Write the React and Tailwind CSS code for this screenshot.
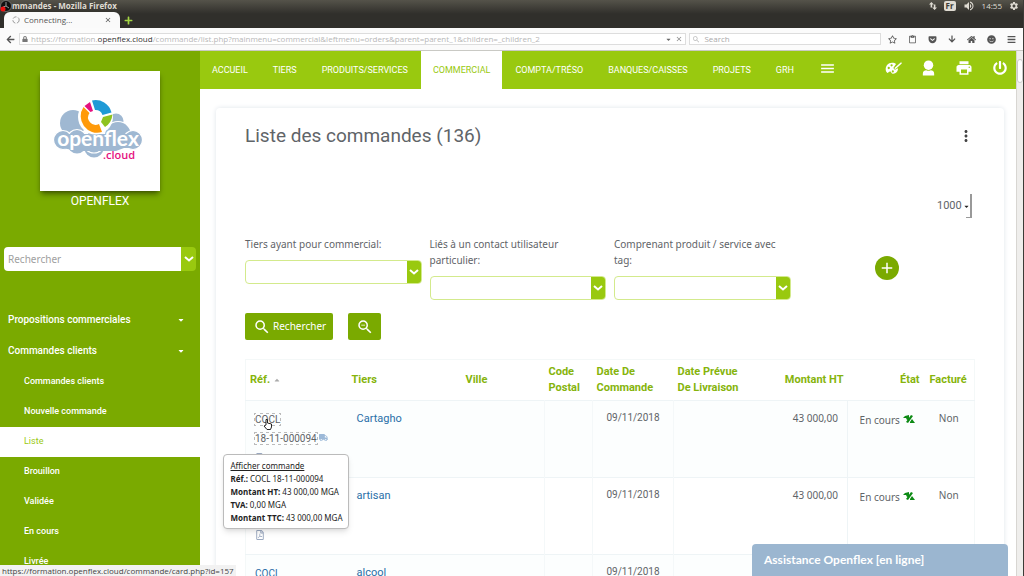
import { useState } from 'react';
import { FaArrowLeft, FaArrowDown, FaLock, FaPlus, FaRegStar, FaHome, FaCaretDown, FaCaretUp, FaTruck, FaRegFilePdf, FaGetPocket, FaSmile, FaPowerOff, FaBars } from 'react-icons/fa';
import { MdMenu, MdSearch, MdZoomOut, MdPrint, MdMoreVert, MdAdd, MdClose, MdVolumeUp, MdContentPaste, MdSettings } from 'react-icons/md';

const menus = ['ACCUEIL', 'TIERS', 'PRODUITS/SERVICES', 'COMMERCIAL', 'COMPTA/TRÉSO', 'BANQUES/CAISSES', 'PROJETS', 'GRH'];

const subMenus = ['Commandes clients', 'Nouvelle commande', 'Liste', 'Brouillon', 'Validée', 'En cours', 'Livrée'];

const filters = [
  { id: 'commercial', label: 'Tiers ayant pour commercial:' },
  { id: 'contact', label: 'Liés à un contact utilisateur particulier:' },
  { id: 'tag', label: 'Comprenant produit / service avec tag:' },
];

const orders = [
  { id: 1, number: '18-11-000094', tiers: 'Cartagho', date: '09/11/2018', amount: '43 000,00', hovered: true },
  { id: 2, number: '18-11-000093', tiers: 'artisan', date: '09/11/2018', amount: '43 000,00' },
  { id: 3, number: '18-11-000092', tiers: 'alcool', date: '09/11/2018', amount: '43 000,00' },
];

const Chevron = () => (
  <svg viewBox="0 0 10 8" className="w-[10px] h-2" fill="none" stroke="white" strokeWidth="2">
    <path d="M1 2 L5 5.5 L9 2" />
  </svg>
);

const Logo = () => (
  <svg viewBox="0 0 120 120" className="w-full h-full">
    <g fill="#9fb8d2">
      <circle cx="33" cy="52" r="13" />
      <circle cx="76" cy="50" r="7.500" />
      <circle cx="54" cy="77" r="9.500" />
      <circle cx="37" cy="73" r="9.500" />
    </g>
    <g fill="#9fb8d2" stroke="white" strokeWidth="1.200">
      <circle cx="78" cy="64" r="13.500" />
      <circle cx="23" cy="69" r="9.500" />
      <circle cx="37" cy="68" r="9.500" />
      <circle cx="54" cy="71" r="11" />
      <circle cx="93" cy="69" r="9.500" />
    </g>
    <path fill="#9fb8d2" d="M22 63h72v14H84l-8 3H38l-16-3z" />
    <circle cx="55.500" cy="46" r="17.500" fill="white" />
    <path fill="#ff9a0a" d="M43.500 36 A16.500 16.500 0 0 0 62 61 L59 53 A7.500 7.500 0 0 1 49.500 42 Z" />
    <path fill="#e5117f" d="M44.500 35 L50 31 L53 40 L50.500 41 Z" />
    <path fill="#1f9ad6" d="M52 29.500 A16.500 16.500 0 0 1 71.500 41.500 L62.500 44 A7.500 7.500 0 0 0 55 39 Z" />
    <path fill="#8fc31f" d="M72.500 43.500 A16.500 16.500 0 0 1 65 56 L61 51 L63 46 Z" />
    <text x="58" y="75" textAnchor="middle" fontFamily="Lato" fontWeight="bold" fontSize="21" fill="white">openflex</text>
    <text x="63" y="88" fontFamily="Open Sans" fontWeight="600" fontSize="11" fill="#e5117f">.cloud</text>
  </svg>
);

const PaletteIcon = () => (
  <svg viewBox="0 0 18 16" className="w-[17px] h-4" fill="white">
    <path fillRule="evenodd" d="M7.500 2.500c2 0 3.200.6 4.200 1.300L8.800 8l1.700 1.800 3.300-1.600c.2 3.600-2.600 6.300-5.800 5.800-1.600-.3-1.200-2-2.500-2.200C3.800 11.600 3.600 13.800 2.300 13 -1 10.500 1 2.500 7.500 2.500zM4 6.800a1.200 1.200 0 1 0 0 2.400 1.200 1.200 0 0 0 0-2.400zM7 4a1.200 1.200 0 1 0 0 2.400A1.200 1.200 0 0 0 7 4zM8.300 10.500a1.100 1.100 0 1 0 0 2.200 1.100 1.100 0 0 0 0-2.200z" />
    <path d="M9.800 8.200 17.500 1.500l-.3 1.300.8.200-6.700 6.100z" />
  </svg>
);

const UserIcon = () => (
  <svg viewBox="0 0 16 18" className="w-[17px] h-[17px]" fill="white">
    <circle cx="8" cy="5.500" r="5" />
    <path d="M2 16.500v-2c0-2.500 2-3.600 3.600-3.600 1.500.8 3.300.8 4.800 0 1.600 0 3.600 1.100 3.600 3.600v2z" />
  </svg>
);

const StatusIcon = () => (
  <svg viewBox="0 0 12 9" className="inline w-3 h-[9px] mb-1" fill="#0d8a14">
    <path d="M0 3 L2 1 L6 0 V4 L4 5 L3 3 Z M8 0 L10 1 L5 8 L3 7 Z M7 7 L9 4 L12 8 H7 Z" />
  </svg>
);

const App = () => {
  const [active, setActive] = useState('Liste');
  const [limit, setLimit] = useState('1000');

  return (
    <div className="h-screen flex flex-col overflow-hidden bg-white border-r border-[#3c3b37] font-['Roboto',sans-serif] text-[#5f6468]">
      {/* Barre de titre */}
      <header className="shrink-0 h-7 flex flex-col bg-linear-to-b from-[#55534a] to-[#302f2b] to-50% font-['Open_Sans',sans-serif]">
        <div className="h-3 flex justify-between items-center pr-1 text-[#dfdbd2]">
          <div className="flex items-center">
            <svg viewBox="0 0 12 12" className="w-3 h-3">
              <circle cx="6" cy="6" r="5.500" fill="#111" stroke="#999" strokeWidth="0.600" />
              <path d="M6 2v4l3 2M6 6 3 7" stroke="#999" strokeWidth="1" fill="none" />
              <circle cx="3" cy="9" r="2.500" fill="#e11" />
            </svg>
            <span className="text-[8px] leading-3 font-bold">mmandes - Mozilla Firefox</span>
          </div>
          <div className="flex items-center gap-[7px] text-[8px] leading-3">
            <svg viewBox="0 0 10 10" className="w-2 h-2" fill="currentColor"><path d="M3 0l3 3H4v4H2V3H0zM7 10L4 7h2V3h2v4h2z" /></svg>
            <span className="bg-[#dfdbd2] text-[#3c3b37] px-0.5 leading-[10px] font-bold rounded-xs">Fr</span>
            <MdVolumeUp size={12} />
            <span>14:55</span>
            <MdSettings size={10} />
          </div>
        </div>
        <div className="h-4 flex items-center gap-1 pl-1">
          <div className="w-[116px] h-4 flex items-center gap-1 px-2 bg-[#fafafa] rounded-t-md text-[#555]">
            <svg viewBox="0 0 10 10" className="w-2 h-2" fill="none" stroke="#888"><circle cx="5" cy="5" r="4" strokeDasharray="5 2" /></svg>
            <span className="flex-1 text-[8px]">Connecting...</span>
            <button aria-label="Fermer l'onglet"><MdClose size={8} /></button>
          </div>
          <button aria-label="Nouvel onglet" className="text-[#a4d644]"><FaPlus size={9} /></button>
        </div>
      </header>

      {/* Barre d'adresse */}
      <div className="shrink-0 h-[23px] flex items-center gap-[3px] pl-1 pr-[7px] bg-[#fbfbfb] border-b border-[#c9c9c4] font-['Open_Sans',sans-serif] text-[8px] text-[#b8b8b8]">
        <button aria-label="Retour" className="w-3 flex justify-center text-[#555]"><FaArrowLeft size={9} /></button>
        <div className="flex-1 h-3 flex items-center gap-[3px] pl-0.5 border border-[#ddd] bg-white">
          <FaLock size={6} className="text-[#777]" />
          <span className="flex-1 whitespace-nowrap">
            https://formation.<span className="text-[#333]">openflex.cloud</span>/commande/list.php?mainmenu=commercial&amp;leftmenu=orders&amp;parent=parent_1&amp;children=_children_2
          </span>
          <FaCaretDown size={7} className="text-[#666]" />
          <MdClose size={8} className="text-[#888] mr-0.5" />
        </div>
        <label className="w-[192px] h-3 flex items-center gap-1 pl-0.5 border border-[#ddd] bg-white">
          <MdSearch size={9} />
          <input aria-label="Search" placeholder="Search" className="w-full outline-none placeholder:text-[#aaa]" />
        </label>
        <div className="flex items-center gap-[11px] pl-1 text-[#555]">
          <FaRegStar size={9} />
          <MdContentPaste size={9} />
          <FaGetPocket size={9} />
          <FaArrowDown size={8} />
          <FaHome size={9} />
          <FaSmile size={9} />
          <FaBars size={9} />
        </div>
      </div>

      <div className="flex-1 min-h-0 flex">
        {/* Menu gauche */}
        <aside className="w-[200px] shrink-0 overflow-hidden bg-[#7aaa00] text-white">
          <div className="w-[120px] h-[120px] mx-auto mt-5 bg-white shadow-md shadow-black/40"><Logo /></div>
          <p className="text-center text-xs leading-5">OPENFLEX</p>
          <form className="flex h-6 mx-1 mt-9 rounded-sm overflow-hidden" onSubmit={(e) => e.preventDefault()}>
            <input aria-label="Rechercher" placeholder="Rechercher" className="flex-1 min-w-0 px-1 bg-white text-[10px] font-['Noto_Sans',sans-serif] text-gray-600 placeholder:text-[#a0a0a0] outline-none" />
            <button aria-label="Ouvrir" className="w-[15px] flex items-center justify-center bg-[#99c90f]"><Chevron /></button>
          </form>

          <nav className="mt-[33px]">
            {['Propositions commerciales', 'Commandes clients'].map((name) => (
              <button key={name} className="w-full h-[31px] flex items-center justify-between pl-2 pr-[15px] text-[10px] font-medium">
                {name}
                <FaCaretDown size={8} />
              </button>
            ))}
            <div className="pt-px">
              {subMenus.map((name) => (
                <a
                  key={name} href="#" onClick={() => setActive(name)}
                  className={active === name ? 'flex items-center h-[30px] pl-6 text-[9px] bg-white text-[#99c90f]' : 'flex items-center h-[30px] pl-6 text-[9px] font-medium'}
                >
                  {name}
                </a>
              ))}
            </div>
          </nav>
        </aside>

        <div className="flex-1 min-w-0 flex flex-col">
          {/* Menu principal */}
          <nav className="shrink-0 h-[38px] flex items-stretch gap-px bg-[#99c90f] text-white text-[9px]">
            {menus.map((name) => (
              <a key={name} href="#" className={name === 'COMMERCIAL' ? 'flex items-center px-3 pt-0.5 bg-white text-[#99c90f]' : 'flex items-center px-3 pt-0.5'}>{name}</a>
            ))}
            <button aria-label="Menu" className="px-3 pb-1"><MdMenu size={17} /></button>
            <div className="ml-auto flex items-center gap-[18px] pr-2 pb-1">
              <button aria-label="Thème"><PaletteIcon /></button>
              <button aria-label="Utilisateur"><UserIcon /></button>
              <button aria-label="Imprimer"><MdPrint size={18} /></button>
              <button aria-label="Déconnexion" className="w-[17px] flex justify-center"><FaPowerOff size={14} /></button>
            </div>
          </nav>

          <main className="flex-1 min-h-0 overflow-hidden px-4 pr-3 pt-[19px]">
            <section className="px-[29px] pt-4 pb-8 bg-white rounded-sm shadow-[0_0_5px_#dfe5ea]">
              <div className="flex justify-between items-center">
                <h1 className="text-[19px] leading-6">Liste des commandes (136)</h1>
                <button aria-label="Options" className="text-[#444]"><MdMoreVert size={18} /></button>
              </div>

              <div className="flex justify-end mt-[46px]">
                <div className="relative mr-[3px] flex items-center border-r-2 border-[#999]">
                  <select
                    aria-label="Lignes par page" value={limit} onChange={(e) => setLimit(e.target.value)}
                    className="appearance-none w-[33px] h-6 text-[11px] outline-none"
                  >
                    <option>1000</option>
                    <option>500</option>
                  </select>
                  <FaCaretDown size={7} className="absolute right-0 pointer-events-none text-[#222]" />
                  <span className="absolute right-0 bottom-0 w-1 h-px bg-[#999]" />
                </div>
              </div>

              <div className="grid grid-cols-4 gap-2 mt-[18px] font-['Noto_Sans',sans-serif]">
                {filters.map((f) => (
                  <div key={f.id}>
                    <label htmlFor={f.id} className="block text-[10px] leading-4 mb-2">{f.label}</label>
                    <div className="flex h-6 border border-[#d3ea8c] rounded-sm overflow-hidden">
                      <select id={f.id} className="appearance-none flex-1 min-w-0 outline-none"><option></option></select>
                      <span className="w-[14px] flex items-center justify-center bg-[#99c90f]"><Chevron /></span>
                    </div>
                  </div>
                ))}
                <button aria-label="Ajouter" className="self-center justify-self-center w-6 h-6 flex items-center justify-center rounded-full bg-[#7aaa00] text-white"><MdAdd size={18} /></button>
              </div>

              <div className="flex gap-[15px] mt-[13px]">
                <button className="h-[27px] flex items-center gap-0.5 pl-2 pr-[7px] rounded-xs bg-[#7aaa00] text-white text-[10px] font-['Noto_Sans',sans-serif]">
                  <MdSearch size={18} /> Rechercher
                </button>
                <button aria-label="Effacer" className="w-[33px] h-[27px] flex items-center justify-center rounded-xs bg-[#7aaa00] text-white"><MdZoomOut size={18} /></button>
              </div>

              <table className="w-full table-fixed mt-[19px] border border-[#f4f8f8] text-[11px] leading-4">
                <thead className="text-left text-[#86b40c]">
                  <tr className="h-[41px]">
                    <th className="w-[102px] px-1 font-bold">Réf. <FaCaretUp size={8} className="inline text-[#aaa]" /></th>
                    <th className="w-[114px] px-1 font-bold">Tiers</th>
                    <th className="w-[83px] px-1 font-bold">Ville</th>
                    <th className="w-12 px-1 font-bold">Code Postal</th>
                    <th className="w-[81px] px-1 font-bold">Date De Commande</th>
                    <th className="px-1 font-bold">Date Prévue De Livraison</th>
                    <th className="w-[95px] px-1 font-bold text-right">Montant HT</th>
                    <th className="w-[76px] px-1 font-bold text-right">État</th>
                    <th className="w-[51px] pl-1.5 font-bold">Facturé</th>
                  </tr>
                </thead>
                <tbody>
                  {orders.map((o) => (
                    <tr key={o.id} className="h-[77px] align-top border-t border-[#eef4f6] odd:bg-[#fcfefe]">
                      <td className="px-[9px] pt-[9px] text-[10px] leading-[19px]">
                        <div className="relative">
                          <a href="#" className={o.hovered ? 'outline-1 outline-dotted outline-[#bbb]' : 'text-[#2a6fa8]'}>COCL<br />{o.number}</a>
                          <FaTruck size={9} className="inline ml-0.5 mb-1 text-[#9cb9d8]" />
                          <br />
                          <FaRegFilePdf size={10} className="inline text-[#9aa8c0]" />
                          {o.hovered && (
                            <svg viewBox="0 0 10 12" className="absolute left-2 top-2 w-[10px] h-3" fill="white" stroke="#222">
                              <path d="M3 7V1.500h1.500V5l4 1v3l-1 2.500H4L1 8z" />
                            </svg>
                          )}
                          {o.hovered && (
                            <div className="absolute z-10 right-[-10px] top-[44px] w-[126px] px-[7px] py-1 bg-white border border-[#bbb] rounded-sm shadow-md text-[8px] leading-[13px] text-[#222] whitespace-nowrap font-['Noto_Sans',sans-serif]">
                              <u>Afficher commande</u><br />
                              <b>Réf.:</b> COCL 18-11-000094<br />
                              <b>Montant HT:</b> 43 000,00 MGA<br />
                              <b>TVA:</b> 0,00 MGA<br />
                              <b>Montant TTC:</b> 43 000,00 MGA
                            </div>
                          )}
                        </div>
                      </td>
                      <td className="px-[9px] pt-[10px]"><a href="#" className="text-[#2a6fa8]">{o.tiers}</a></td>
                      <td></td>
                      <td className="border-x border-[#f4f8f9]"></td>
                      <td className="pt-[9px] text-[10px] text-center">{o.date}</td>
                      <td className="border-l border-[#f4f8f9]"></td>
                      <td className="px-[9px] pt-[9px] text-[10px] text-right border-r border-[#eef4f6] font-['Noto_Sans',sans-serif]">{o.amount}</td>
                      <td className="pl-1 pr-[9px] pt-[11px] text-[10px] text-right font-['Noto_Sans',sans-serif]">En cours <StatusIcon /></td>
                      <td className="pt-[9px] text-[10px] text-center font-['Noto_Sans',sans-serif]">Non</td>
                    </tr>
                  ))}
                </tbody>
              </table>
            </section>
          </main>
        </div>

        {/* Barre de défilement */}
        <div className="w-[7px] shrink-0 bg-[#efeeec] border-l border-[#d8d6d2] pt-2">
          <div className="h-6 bg-white border border-[#ccc] rounded-sm" />
        </div>
      </div>

      <div className="absolute left-0 bottom-0 h-[11px] px-0.5 bg-[#f2f2f2] text-[8px] leading-[11px] text-[#444] font-['Open_Sans',sans-serif]">
        https://formation.openflex.cloud/commande/card.php?id=157
      </div>
      <button className="absolute right-4 bottom-0 w-64 h-8 px-3 text-left rounded-t-sm bg-[#9bb6d0] text-white text-xs font-bold font-['Lato',sans-serif]">
        Assistance Openflex [en ligne]
      </button>
    </div>
  );
};

export default App;
